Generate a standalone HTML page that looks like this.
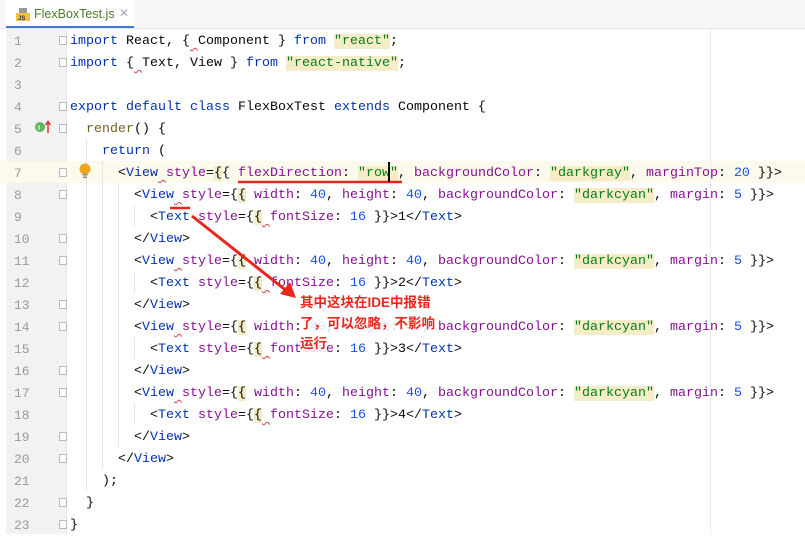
<!DOCTYPE html>
<html><head><meta charset="utf-8"><style>
body{margin:0;width:805px;height:534px;background:#fff;overflow:hidden;position:relative;font-family:"Liberation Mono",monospace;}
.tabbar{position:absolute;left:0;top:0;width:805px;height:28px;background:#f7f7f7;border-bottom:1px solid #e4e4e4;}
.tab{position:absolute;left:6px;top:0;width:128px;height:28px;background:#fff;}
.tab .u{position:absolute;left:0;bottom:0;width:128px;height:2px;background:#3d7bd6;}
.tab .t{position:absolute;left:28px;top:7px;font:12.5px "Liberation Sans",sans-serif;color:#4b7a2c;}
.tab .x{position:absolute;left:113px;top:6px;font:12px "Liberation Sans",sans-serif;color:#aaa;}
.js{position:absolute;left:10px;top:8px;width:14px;height:13px;}
.gutter{position:absolute;left:6px;top:29px;width:60px;height:505px;background:#f2f2f2;border-right:1px solid #e6e6e6;}
.cur{position:absolute;left:0;top:161px;width:805px;height:22px;background:#fcfaed;}
.ln{position:absolute;left:14px;width:20px;font-size:13px;color:#9a9a9a;line-height:22px;}
.code{position:absolute;left:70px;font-size:13.33px;line-height:22px;white-space:pre;color:#080808;}
.k{color:#0033b3}.s{color:#067d17;background:#f5ecc8}.p{color:#871094}.n{color:#1750eb}.f{color:#795e26}.tg{color:#0033b3}
.br{background:#f3ecc6}
.sq{text-decoration:underline wavy #e04040;text-decoration-thickness:1px;text-underline-offset:3px}
.fold{position:absolute;left:59px;width:8px;height:9px;border:1px solid #b8b8b8;border-radius:1px;background:#fff;box-sizing:border-box}
.guide{position:absolute;width:1px;background:#e6e6e6}
.rm{position:absolute;left:710px;top:29px;width:1px;height:505px;background:#ececec}
.note{position:absolute;left:300px;font:bold 13.5px "Liberation Sans","Noto Sans CJK SC",sans-serif;color:#e8271c;line-height:20px;background:rgba(255,255,255,.85);}
</style></head><body>
<div class="tabbar"><div class="tab">
<svg class="js" viewBox="0 0 14 13"><rect x="3" y="0" width="8" height="5" fill="#999"/><rect x="0" y="5" width="14" height="8" fill="#f3c244"/><text x="2" y="12" font-size="6" font-family="Liberation Sans" font-weight="bold" fill="#333">JS</text></svg>
<span class="t">FlexBoxTest.js</span><span class="x">✕</span><div class="u"></div></div></div>
<div class="gutter"></div>
<div class="cur"></div>
<div class="rm"></div>
<div class="guide" style="left:86px;top:139px;height:352px"></div>
<div class="guide" style="left:102px;top:161px;height:308px"></div>
<div class="guide" style="left:118px;top:183px;height:264px"></div>
<div class="guide" style="left:134px;top:205px;height:22px"></div>
<div class="guide" style="left:134px;top:271px;height:22px"></div>
<div class="guide" style="left:134px;top:337px;height:22px"></div>
<div class="guide" style="left:134px;top:403px;height:22px"></div>
<svg style="position:absolute;left:33px;top:119px" width="20" height="16"><circle cx="7" cy="8" r="5" fill="#5fb85f"/><text x="5" y="11" font-size="7" fill="#fff" font-family="Liberation Sans" font-weight="bold">I</text><path d="M15 14V3M12.5 6L15 2.5L17.5 6" stroke="#e53030" stroke-width="1.5" fill="none"/></svg>
<svg style="position:absolute;left:78px;top:162px" width="14" height="18"><circle cx="7" cy="7" r="5.5" fill="#f0a31c"/><rect x="4.5" y="12" width="5" height="1.5" fill="#888"/><rect x="5" y="14.5" width="4" height="1.5" fill="#888"/></svg>
<div class="code" style="top:31px"><span class="k">import</span> React, {<span class="sq"> </span>Component } <span class="k">from</span> <span class="s">"react"</span>;
<span class="k">import</span> {<span class="sq"> </span>Text, View } <span class="k">from</span> <span class="s">"react-native"</span>;

<span class="k">export default class</span> FlexBoxTest <span class="k">extends</span> Component {
  <span class="f">render</span>() {
    <span class="k">return</span> (
      &lt;<span class="tg">View</span><span class="sq"> </span><span class="p">style</span>=<span class="br">{</span>{ <span class="p">flexDirection</span>: <span class="s">"row"</span>, <span class="p">backgroundColor</span>: <span class="s">"darkgray"</span>, <span class="p">marginTop</span>: <span class="n">20</span> }}&gt;
        &lt;<span class="tg">View</span><span class="sq"> </span><span class="p">style</span>={<span class="br">{</span> <span class="p">width</span>: <span class="n">40</span>, <span class="p">height</span>: <span class="n">40</span>, <span class="p">backgroundColor</span>: <span class="s">"darkcyan"</span>, <span class="p">margin</span>: <span class="n">5</span> }}&gt;
          &lt;<span class="tg">Text</span> <span class="p">style</span>={<span class="br">{</span><span class="sq"> </span><span class="p">fontSize</span>: <span class="n">16</span> }}&gt;1&lt;/<span class="tg">Text</span>&gt;
        &lt;/<span class="tg">View</span>&gt;
        &lt;<span class="tg">View</span><span class="sq"> </span><span class="p">style</span>={<span class="br">{</span> <span class="p">width</span>: <span class="n">40</span>, <span class="p">height</span>: <span class="n">40</span>, <span class="p">backgroundColor</span>: <span class="s">"darkcyan"</span>, <span class="p">margin</span>: <span class="n">5</span> }}&gt;
          &lt;<span class="tg">Text</span> <span class="p">style</span>={<span class="br">{</span><span class="sq"> </span><span class="p">fontSize</span>: <span class="n">16</span> }}&gt;2&lt;/<span class="tg">Text</span>&gt;
        &lt;/<span class="tg">View</span>&gt;
        &lt;<span class="tg">View</span><span class="sq"> </span><span class="p">style</span>={<span class="br">{</span> <span class="p">width</span>: <span class="n">40</span>, <span class="p">height</span>: <span class="n">40</span>, <span class="p">backgroundColor</span>: <span class="s">"darkcyan"</span>, <span class="p">margin</span>: <span class="n">5</span> }}&gt;
          &lt;<span class="tg">Text</span> <span class="p">style</span>={<span class="br">{</span><span class="sq"> </span><span class="p">fontSize</span>: <span class="n">16</span> }}&gt;3&lt;/<span class="tg">Text</span>&gt;
        &lt;/<span class="tg">View</span>&gt;
        &lt;<span class="tg">View</span><span class="sq"> </span><span class="p">style</span>={<span class="br">{</span> <span class="p">width</span>: <span class="n">40</span>, <span class="p">height</span>: <span class="n">40</span>, <span class="p">backgroundColor</span>: <span class="s">"darkcyan"</span>, <span class="p">margin</span>: <span class="n">5</span> }}&gt;
          &lt;<span class="tg">Text</span> <span class="p">style</span>={<span class="br">{</span><span class="sq"> </span><span class="p">fontSize</span>: <span class="n">16</span> }}&gt;4&lt;/<span class="tg">Text</span>&gt;
        &lt;/<span class="tg">View</span>&gt;
      &lt;/<span class="tg">View</span>&gt;
    );
  }
}</div>
<div style="position:absolute;left:0;top:2px">
<div class="ln" style="top:29px">1</div><div class="ln" style="top:51px">2</div><div class="ln" style="top:73px">3</div><div class="ln" style="top:95px">4</div><div class="ln" style="top:117px">5</div><div class="ln" style="top:139px">6</div><div class="ln" style="top:161px">7</div><div class="ln" style="top:183px">8</div><div class="ln" style="top:205px">9</div><div class="ln" style="top:227px">10</div><div class="ln" style="top:249px">11</div><div class="ln" style="top:271px">12</div><div class="ln" style="top:293px">13</div><div class="ln" style="top:315px">14</div><div class="ln" style="top:337px">15</div><div class="ln" style="top:359px">16</div><div class="ln" style="top:381px">17</div><div class="ln" style="top:403px">18</div><div class="ln" style="top:425px">19</div><div class="ln" style="top:447px">20</div><div class="ln" style="top:469px">21</div><div class="ln" style="top:491px">22</div><div class="ln" style="top:513px">23</div>
</div>
<div class="fold" style="top:36px"></div><div class="fold" style="top:58px"></div><div class="fold" style="top:102px"></div><div class="fold" style="top:124px"></div><div class="fold" style="top:168px"></div><div class="fold" style="top:190px"></div><div class="fold" style="top:234px"></div><div class="fold" style="top:256px"></div><div class="fold" style="top:300px"></div><div class="fold" style="top:322px"></div><div class="fold" style="top:366px"></div><div class="fold" style="top:388px"></div><div class="fold" style="top:432px"></div><div class="fold" style="top:454px"></div><div class="fold" style="top:498px"></div><div class="fold" style="top:520px"></div>
<svg style="position:absolute;left:0;top:0" width="805" height="534">
<path d="M238 182H402" stroke="#e8271c" stroke-width="2.5"/>
<path d="M170 208H190" stroke="#e8271c" stroke-width="2.5"/>
<path d="M192 216L288 292" stroke="#e8271c" stroke-width="3"/>
<path d="M296 298L280 294L290 282Z" fill="#e8271c"/>
<rect x="388" y="162" width="2" height="20" fill="#000"/>
</svg>
<div class="note" style="top:293px">其中这块在IDE中报错</div>
<div class="note" style="top:314px">了，可以忽略，不影响</div>
<div class="note" style="top:334px">运行</div>
</body></html>
